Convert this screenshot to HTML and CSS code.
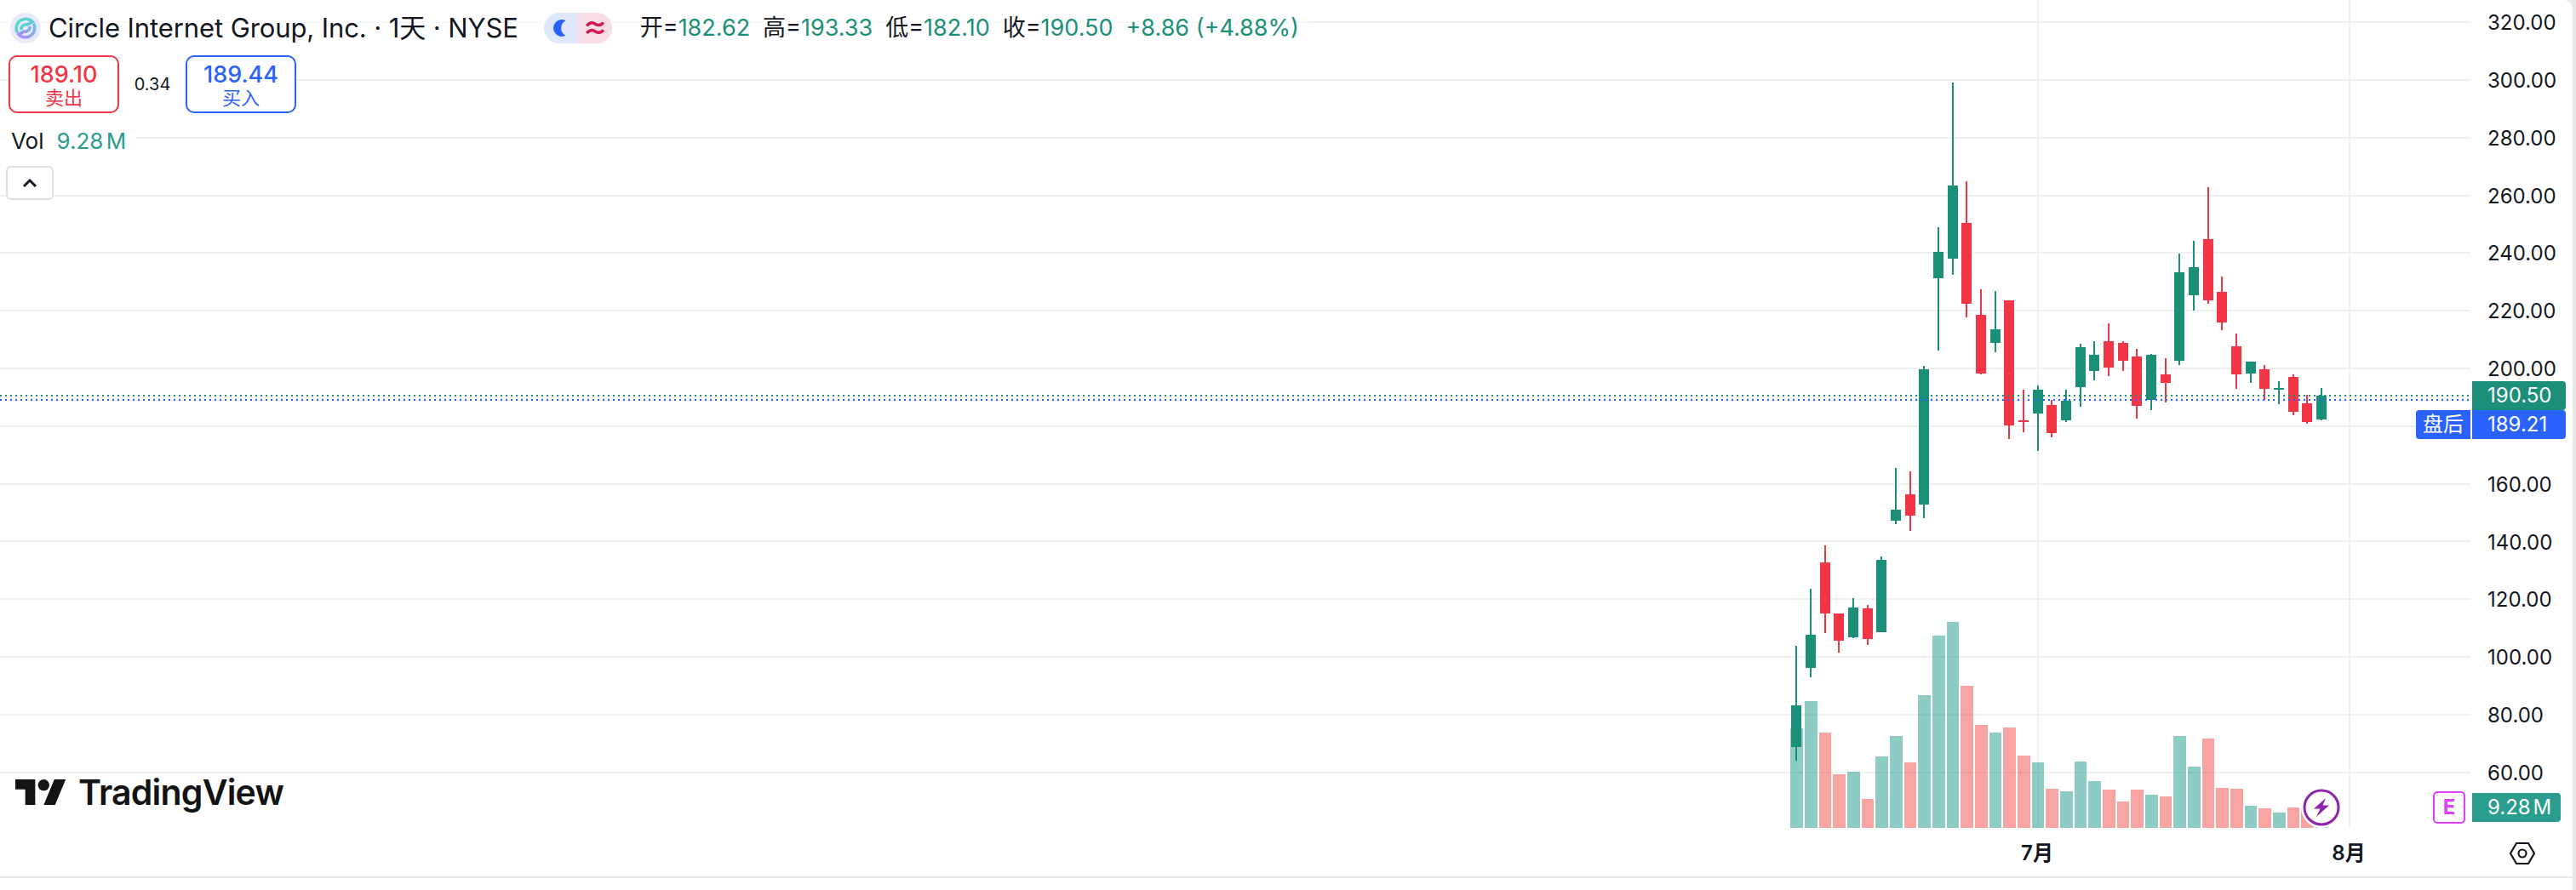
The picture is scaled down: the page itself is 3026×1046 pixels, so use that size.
FILE: index.html
```html
<!DOCTYPE html>
<html lang="zh">
<head>
<meta charset="utf-8">
<title>Circle Internet Group, Inc.</title>
<link rel="stylesheet" href="styles.css">
</head>
<body>
<div class="widget">
  <div class="upper">
    <div class="pane">
      <svg class="chart" width="2902" height="974" viewBox="0 0 2902 974">
        <path class="grid" d="M0 26H2902M0 94H2902M0 162H2902M0 230H2902M0 297H2902M0 365H2902M0 433H2902M0 501H2902M0 569H2902M0 636H2902M0 704H2902M0 772H2902M0 840H2902M0 908H2902M2394 0V973M2760 0V973"/>
        <path class="vol-up" d="M2103 856h15V973h-15zM2120 824h15V973h-15zM2170 907h15V973h-15zM2203 889h15V973h-15zM2220 865h15V973h-15zM2253 817h15V973h-15zM2270 747h15V973h-15zM2287 731h14V973h-14zM2337 861h14V973h-14zM2387 896h14V973h-14zM2420 930h15V973h-15zM2437 895h14V973h-14zM2453 918h15V973h-15zM2520 934h15V973h-15zM2553 865h15V973h-15zM2570 901h15V973h-15zM2637 947h14V973h-14zM2670 955h15V973h-15zM2720 971h15V973h-15z"/>
        <path class="vol-down" d="M2137 861h14V973h-14zM2153 910h15V973h-15zM2187 939h14V973h-14zM2237 896h14V973h-14zM2303 806h15V973h-15zM2320 852h15V973h-15zM2353 855h15V973h-15zM2370 888h15V973h-15zM2403 927h15V973h-15zM2470 928h15V973h-15zM2487 942h14V973h-14zM2503 928h15V973h-15zM2537 936h14V973h-14zM2587 868h14V973h-14zM2603 926h15V973h-15zM2620 927h15V973h-15zM2653 950h15V973h-15zM2687 949h14V973h-14zM2703 949h15V973h-15z"/>
        <path class="up" d="M2109 759h2V894h-2zM2104 829h12V878h-12zM2126 692h2V796h-2zM2121 746h12V785h-12zM2176 703h2V750h-2zM2171 714h12V749h-12zM2209 654h2V743h-2zM2204 658h12V743h-12zM2226 550h2V616h-2zM2221 599h12V612h-12zM2259 430h2V609h-2zM2254 434h12V593h-12zM2276 267h2V412h-2zM2271 296h12V327h-12zM2293 97h2V323h-2zM2288 218h12V304h-12zM2343 342h2V414h-2zM2338 387h12V403h-12zM2393 453h2V530h-2zM2388 458h12V486h-12zM2426 458h2V496h-2zM2421 471h12V494h-12zM2443 404h2V478h-2zM2438 408h12V455h-12zM2459 401h2V447h-2zM2454 417h12V436h-12zM2526 416h2V482h-2zM2521 417h12V470h-12zM2559 298h2V429h-2zM2554 320h12V424h-12zM2576 283h2V365h-2zM2571 314h12V347h-12zM2643 425h2V450h-2zM2638 425h12V439h-12zM2676 448h2V475h-2zM2671 456h12V458h-12zM2726 456h2V494h-2zM2721 465h12V493h-12z"/>
        <path class="down" d="M2143 641h2V744h-2zM2138 661h12V721h-12zM2159 721h2V767h-2zM2154 721h12V753h-12zM2193 711h2V758h-2zM2188 715h12V751h-12zM2243 554h2V624h-2zM2238 581h12V606h-12zM2309 213h2V373h-2zM2304 262h12V357h-12zM2326 340h2V440h-2zM2321 370h12V439h-12zM2359 353h2V516h-2zM2354 353h12V500h-12zM2376 458h2V508h-2zM2371 494h12V496h-12zM2409 470h2V514h-2zM2404 476h12V509h-12zM2476 380h2V442h-2zM2471 401h12V432h-12zM2493 401h2V436h-2zM2488 403h12V424h-12zM2509 410h2V492h-2zM2504 419h12V477h-12zM2543 421h2V473h-2zM2538 440h12V450h-12zM2593 220h2V357h-2zM2588 281h12V353h-12zM2609 325h2V388h-2zM2604 343h12V379h-12zM2626 392h2V457h-2zM2621 407h12V440h-12zM2659 429h2V470h-2zM2654 434h12V457h-12zM2693 440h2V488h-2zM2688 443h12V484h-12zM2709 464h2V498h-2zM2704 474h12V496h-12z"/>
        <path class="dot-up" d="M0 465H2902"/>
        <path class="dot-post" d="M0 470H2902"/>
      </svg>

      <div class="legend">
        <div class="title-row">
          <svg class="symbol" width="36" height="36" viewBox="0 0 36 36">
            <defs>
              <linearGradient id="symbolTeal" x1="0" y1="0" x2="1" y2="1"><stop offset="0" stop-color="#58e0c0"/><stop offset="1" stop-color="#62b8f0"/></linearGradient>
              <linearGradient id="symbolViolet" x1="1" y1="0" x2="0" y2="1"><stop offset="0" stop-color="#6cc0f0"/><stop offset="1" stop-color="#a78bfa"/></linearGradient>
            </defs>
            <circle class="symbol-bg" cx="18" cy="18" r="18"/>
            <path class="symbol-teal" d="M8.500 23.500A11 11 0 0 1 26 10.500L20 14A5.500 5.500 0 0 0 13 20"/>
            <path class="symbol-violet" d="M27.500 12.500A11 11 0 0 1 10 25.500L16 22A5.500 5.500 0 0 0 23 16"/>
          </svg>
          <span class="symbol-name">Circle Internet Group, Inc. · 1天 · NYSE</span>
          <span class="status-pill">
            <span class="status-half status-moon">
              <svg width="22" height="22" viewBox="0 0 20 20"><path class="moon" d="M15 2A9 9 0 1 0 15 18A9 9 0 0 1 15 2Z"/></svg>
            </span>
            <span class="status-half status-wave">
              <svg width="26" height="22" viewBox="0 0 24 20"><path class="wave" d="M3 7.500C7 3 10 4 12 5.500S18 8 21 4M3 15.500C7 11 10 12 12 13.500S18 16 21 12"/></svg>
            </span>
          </span>
          <span class="ohlc">
            <span class="ohlc-item"><span class="ohlc-key">开=</span>182.62</span>
            <span class="ohlc-item"><span class="ohlc-key">高=</span>193.33</span>
            <span class="ohlc-item"><span class="ohlc-key">低=</span>182.10</span>
            <span class="ohlc-item"><span class="ohlc-key">收=</span>190.50</span>
            <span class="ohlc-item">+8.86 (+4.88%)</span>
          </span>
        </div>
        <div class="trade-row">
          <div class="trade-btn sell"><span class="trade-price">189.10</span><span class="trade-label">卖出</span></div>
          <span class="spread">0.34</span>
          <div class="trade-btn buy"><span class="trade-price">189.44</span><span class="trade-label">买入</span></div>
        </div>
        <div class="vol-row"><span class="vol-name">Vol</span><span class="vol-value">9.28 M</span></div>
        <button class="collapse" type="button" aria-label="collapse">
          <svg width="18" height="12" viewBox="0 0 18 12"><path class="chevron" d="M2 10L9 3L16 10"/></svg>
        </button>
      </div>

      <div class="brand">
        <svg width="60" height="30" viewBox="0 4 36 18"><path class="brand-mark" d="M14 22H7V11H0V4h14v18zM28 22h-8l7.500-18h8L28 22z"/><circle class="brand-mark" cx="20" cy="8" r="4"/></svg>
        <span class="brand-name">TradingView</span>
      </div>

      <div class="bolt-badge">
        <svg width="44" height="44" viewBox="0 0 44 44">
          <circle class="bolt-ring" cx="22" cy="22" r="20"/>
          <path class="bolt" d="M27 11L13 23.500H20.500L16 33L31 19.500H23.500Z"/>
        </svg>
      </div>
    </div>

    <div class="price-axis">
      <div class="ticks">
        <span class="tick">320.00</span><span class="tick">300.00</span><span class="tick">280.00</span><span class="tick">260.00</span><span class="tick">240.00</span><span class="tick">220.00</span><span class="tick">200.00</span><span class="tick">180.00</span><span class="tick">160.00</span><span class="tick">140.00</span><span class="tick">120.00</span><span class="tick">100.00</span><span class="tick">80.00</span><span class="tick">60.00</span>
      </div>
      <div class="tags-price">
        <span class="tag tag-last">190.50</span>
        <span class="tag-row"><span class="tag-session">盘后</span><span class="tag tag-post">189.21</span></span>
      </div>
      <div class="tags-vol">
        <span class="flag-e">E</span>
        <span class="tag tag-vol">9.28 M</span>
      </div>
    </div>
  </div>

  <div class="time-axis">
    <div class="time-labels">
      <span class="time-label">7月</span>
      <span class="time-label">8月</span>
    </div>
    <div class="time-settings">
      <svg width="32" height="28" viewBox="0 0 32 28">
        <path class="hex" d="M9 2H23L30 14L23 26H9L2 14Z"/>
        <circle class="hex" cx="16" cy="14" r="4.500"/>
      </svg>
    </div>
  </div>
</div>
</body>
</html>
```

FILE: styles.css
```css
* { box-sizing: border-box; }

html, body {
  margin: 0;
  height: 100%;
  overflow: hidden;
}

body {
  background: #e8e8e8;
  font-family: Inter, "Noto Sans CJK SC", "Liberation Sans", sans-serif;
  color: #131722;
}

.widget {
  width: 3022px;
  height: 1046px;
  background: #fff;
  border-top-right-radius: 10px;
  display: flex;
  flex-direction: column;
  overflow: hidden;
}

.upper {
  display: flex;
  height: 974px;
  flex: none;
}

.pane {
  position: relative;
  width: 2902px;
  flex: none;
}

.chart { display: block; }

.grid { stroke: #f0f0f0; stroke-width: 2; fill: none; }
.vol-up { fill: #2a9d8f; fill-opacity: .53; }
.vol-down { fill: #ef5350; fill-opacity: .53; }
.up { fill: #1c8f78; }
.down { fill: #f23645; }
.dot-up { stroke: #1c8f78; stroke-width: 2; stroke-dasharray: 2 4; fill: none; }
.dot-post { stroke: #2962ff; stroke-width: 2; stroke-dasharray: 2 4; fill: none; }

/* legend */
.legend {
  position: absolute;
  top: 0;
  left: 0;
  display: flex;
  flex-direction: column;
  align-items: flex-start;
}

.title-row {
  display: flex;
  align-items: center;
  width: 1537px;
  height: 36px;
  margin-top: 15px;
  padding-left: 12px;
  background: rgba(255, 255, 255, .65);
}

.symbol { flex: none; }
.symbol-bg { fill: #e7eaf8; }
.symbol-teal { fill: none; stroke: url(#symbolTeal); stroke-width: 3.600; }
.symbol-violet { fill: none; stroke: url(#symbolViolet); stroke-width: 3.600; }

.symbol-name {
  margin-left: 9px;
  font-size: 31px;
  line-height: 36px;
  white-space: nowrap;
  letter-spacing: -.1px;
}

.status-pill {
  display: flex;
  height: 36px;
  margin-left: 30px;
  border-radius: 18px;
  overflow: hidden;
}

.status-half {
  width: 40px;
  display: flex;
  align-items: center;
  justify-content: center;
}

.status-moon { background: #dfe8fc; }
.status-wave { background: #f8dde4; }
.moon { fill: #2962ff; }
.wave { fill: none; stroke: #d4184f; stroke-width: 3.200; }

.ohlc {
  display: flex;
  margin-left: 33px;
  gap: 15px;
  font-size: 27px;
  line-height: 36px;
  color: #1c8f78;
  white-space: nowrap;
}

.ohlc-key { color: #131722; }

.trade-row {
  display: flex;
  align-items: center;
  margin-top: 14px;
  padding-left: 10px;
}

.trade-btn {
  width: 130px;
  height: 68px;
  border: 2px solid;
  border-radius: 10px;
  background: #fff;
  display: flex;
  flex-direction: column;
  align-items: center;
  padding-top: 7px;
}

.sell { border-color: #f23645; color: #f23645; }
.buy { border-color: #2962ff; color: #2962ff; }

.trade-price {
  font-size: 27px;
  line-height: 28px;
  font-weight: 500;
}

.trade-label {
  font-size: 22px;
  line-height: 27px;
}

.spread {
  width: 78px;
  text-align: center;
  font-size: 20px;
  line-height: 28px;
  background: #fff;
}

.vol-row {
  display: flex;
  align-items: center;
  width: 160px;
  height: 36px;
  margin-top: 15px;
  padding-left: 13px;
  background: #fff;
  font-size: 26px;
  line-height: 36px;
}

.vol-value {
  margin-left: 15px;
  color: #2a9d8f;
  word-spacing: -4px;
}

.collapse {
  display: flex;
  align-items: center;
  justify-content: center;
  width: 56px;
  height: 40px;
  margin: 11px 0 0 7px;
  padding: 0;
  background: #fff;
  border: 2px solid #e0e0e0;
  border-radius: 6px;
}

.chevron { fill: none; stroke: #131722; stroke-width: 3; }

/* watermark */
.brand {
  position: absolute;
  left: 18px;
  top: 916px;
  display: flex;
  align-items: center;
  gap: 14px;
  height: 30px;
}

.brand svg { flex: none; }
.brand-mark { fill: #131313; }

.brand-name {
  font-size: 41px;
  line-height: 30px;
  font-weight: 600;
  color: #131313;
  letter-spacing: -.8px;
}

.bolt-badge {
  position: absolute;
  left: 2705px;
  top: 927px;
  width: 44px;
  height: 44px;
  border-radius: 50%;
  box-shadow: 0 0 0 2px #fff;
  background: #fff;
}

.bolt-badge svg { display: block; }
.bolt-ring { fill: #fff; stroke: #8e24aa; stroke-width: 3; }
.bolt { fill: #8e24aa; }

/* price axis */
.price-axis {
  position: relative;
  width: 120px;
  flex: none;
}

.ticks {
  display: flex;
  flex-direction: column;
  margin-top: -7px;
  padding-left: 20px;
}

.tick {
  display: block;
  height: 67.850px;
  line-height: 67.850px;
  font-size: 24px;
  white-space: nowrap;
}

.tags-price {
  position: absolute;
  top: 448px;
  left: -64px;
  display: flex;
  flex-direction: column;
  align-items: flex-end;
  width: 176px;
}

.tag {
  display: block;
  height: 34px;
  line-height: 34px;
  padding-left: 18px;
  font-size: 24px;
  color: #fff;
  white-space: nowrap;
  border-radius: 0 4px 4px 0;
}

.tag-last { width: 110px; background: #1c8f78; }
.tag-post { width: 110px; background: #2962ff; }

.tag-row { display: flex; gap: 2px; }

.tag-session {
  width: 64px;
  height: 34px;
  line-height: 34px;
  text-align: center;
  font-size: 24px;
  color: #fff;
  background: #2962ff;
  border-radius: 4px 0 0 4px;
}

.tags-vol {
  position: absolute;
  top: 930px;
  left: -44px;
  display: flex;
  align-items: center;
  gap: 8px;
}

.flag-e {
  width: 38px;
  height: 38px;
  border: 2px solid #e040fb;
  border-radius: 5px;
  text-align: center;
  font-size: 24px;
  line-height: 34px;
  font-weight: 700;
  color: #e040fb;
  background: #fff;
}

.tag-vol { width: 104px; background: #2a9d8f; word-spacing: -4px; }

/* time axis */
.time-axis {
  flex: none;
  display: flex;
  height: 58px;
  border-bottom: 2px solid #e8e8e8;
}

.time-labels {
  display: flex;
  width: 2902px;
  padding: 11px 0 0 2373px;
  gap: 326px;
  flex: none;
}

.time-label {
  width: 40px;
  text-align: center;
  font-size: 24px;
  line-height: 36px;
  font-weight: 600;
  white-space: nowrap;
}

.time-settings {
  padding: 15px 0 0 45px;
}

.time-settings svg { display: block; }
.hex { fill: none; stroke: #131722; stroke-width: 2.200; }
```
